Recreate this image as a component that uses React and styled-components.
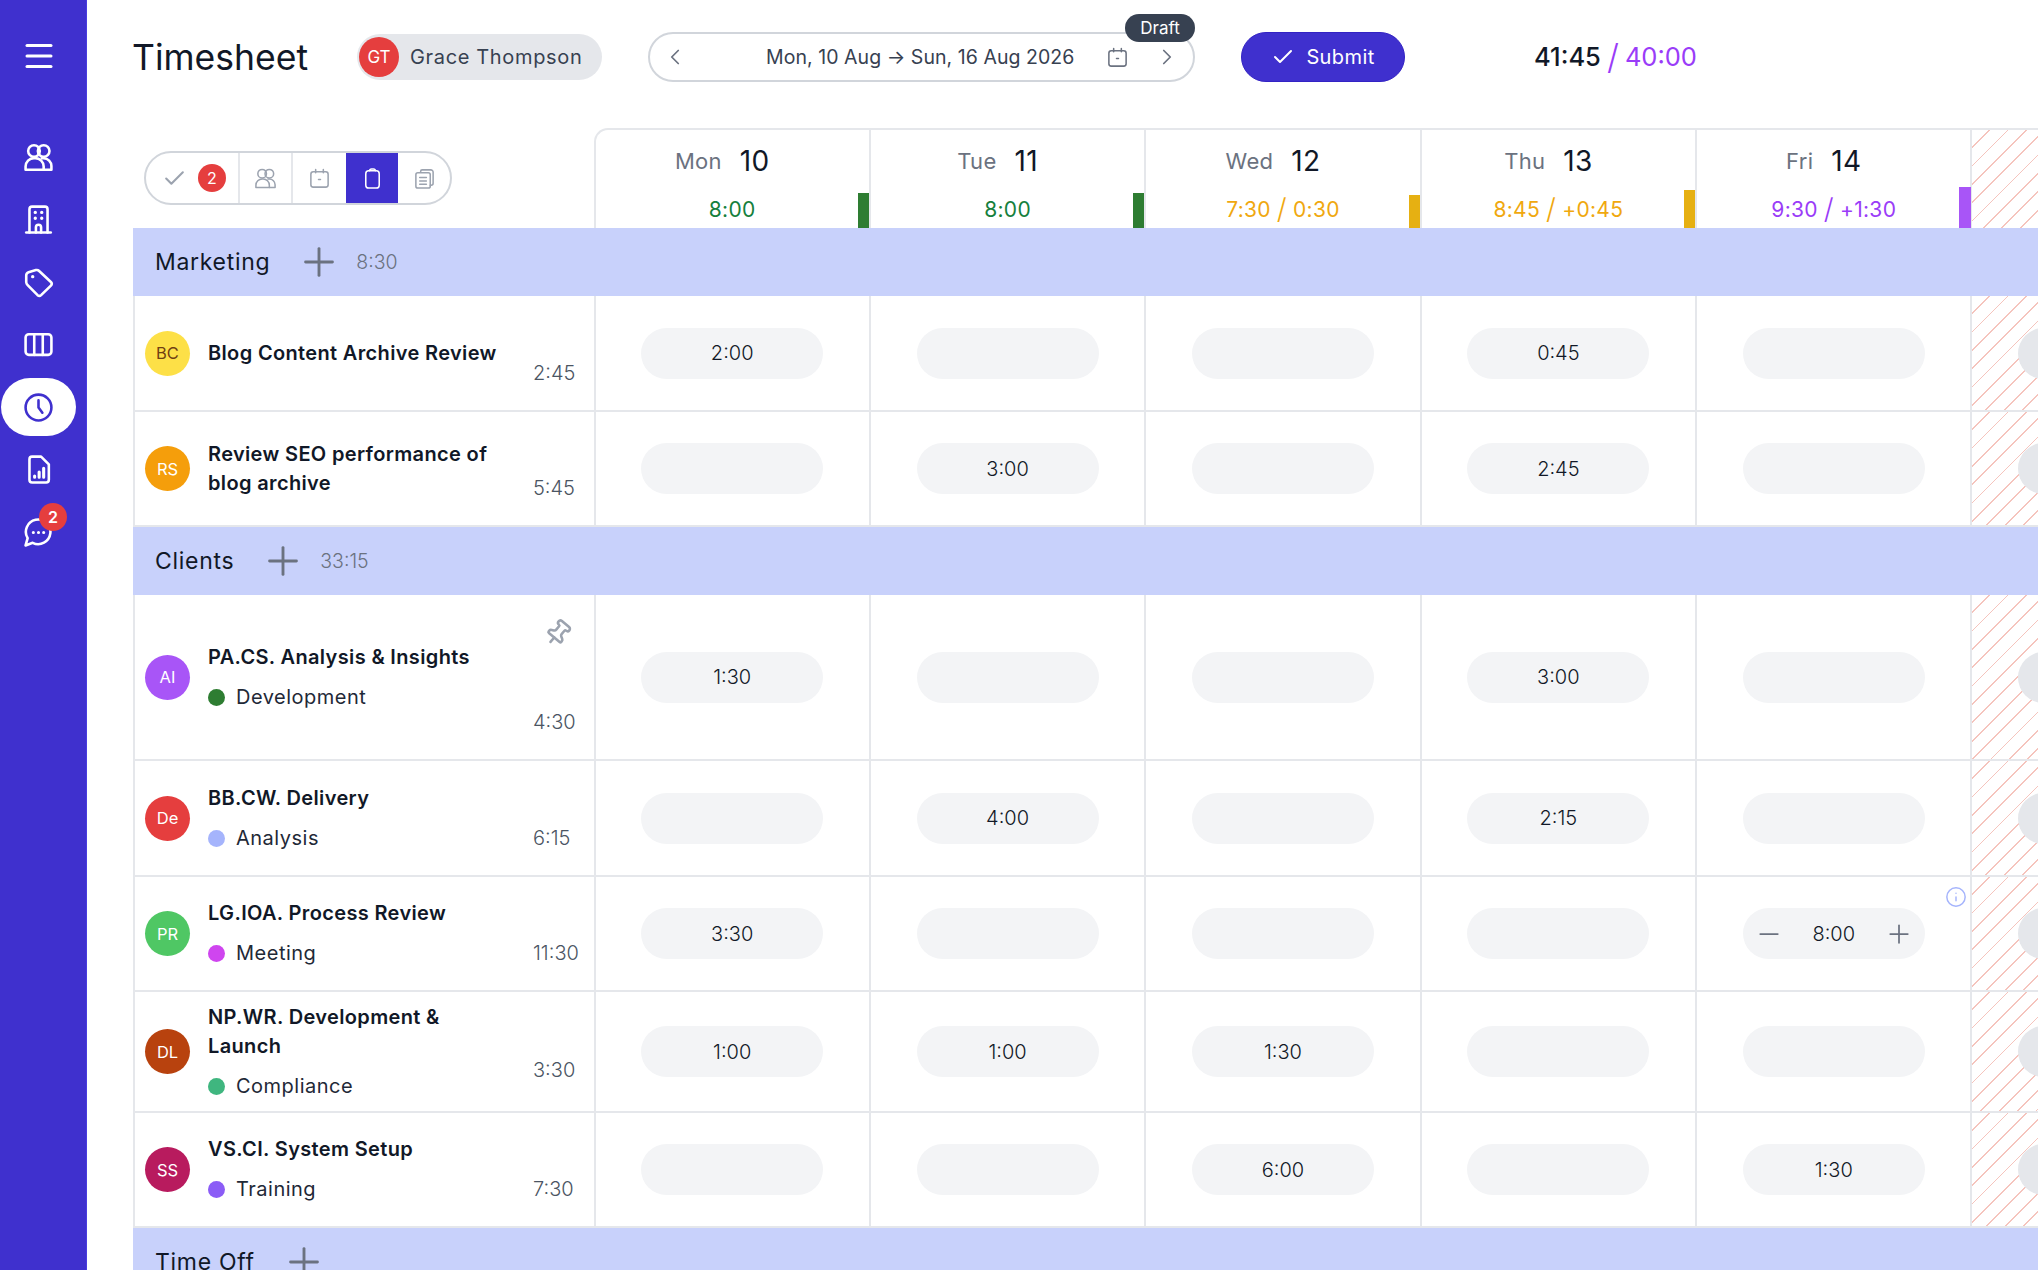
import React from 'react';
import styled, { createGlobalStyle, css } from 'styled-components';
import { Check, ChevronLeft, ChevronRight, Info, Menu, Minus, Pin, Plus } from 'lucide-react';

const GlobalStyle = createGlobalStyle`
  html, body {
    margin: 0;
    height: 100%;
    overflow: hidden;
    background: #fff;
    font-family: Inter, "Liberation Sans", sans-serif;
    color: #111827;
  }
  * { box-sizing: border-box; }
`;

const hatched = css`
  background: repeating-linear-gradient(135deg, #fff 0, #fff 11.8px, #f5c4bd 11.8px, #f5c4bd 13px);
`;

const Page = styled.div`
  display: flex;
  width: 100vw;
  height: 100vh;
  overflow: hidden;
`;

const Sidebar = styled.nav`
  flex: 0 0 87px;
  background: #3f30ce;
  border-right: 1px solid #4a3ce0;
  display: flex;
  flex-direction: column;
  align-items: flex-start;
  padding: 40px 0 0 1px;
  color: #fff;
`;

const SideMenu = styled.div`
  width: 75px;
  height: 32px;
  margin-bottom: 56px;
  display: flex;
  align-items: center;
  justify-content: center;
`;

const SideItem = styled.div`
  position: relative;
  width: 75px;
  height: 58px;
  margin-bottom: 4.5px;
  border-radius: 29px;
  display: flex;
  align-items: center;
  justify-content: center;
  background: ${p => (p.$active ? '#fff' : 'transparent')};
  color: ${p => (p.$active ? '#3f30ce' : '#fff')};
`;

const SideBadge = styled.span`
  position: absolute;
  top: 0;
  left: 38px;
  width: 28px;
  height: 28px;
  border-radius: 50%;
  background: #e53e3e;
  color: #fff;
  font-size: 16px;
  font-weight: 600;
  display: flex;
  align-items: center;
  justify-content: center;
`;

const Main = styled.main`
  flex: 1;
  min-width: 0;
  padding: 32px 0 0 46px;
  overflow: hidden;
`;

const TopBar = styled.header`
  display: flex;
  align-items: center;
  height: 50px;
  margin-bottom: 46px;
`;

const Title = styled.h1`
  margin: 0 47px 0 -1px;
  width: 178px;
  font-size: 35.500px;
  font-weight: 400;
  color: #111827;
  white-space: nowrap;
`;

const UserChip = styled.div`
  width: 245px;
  height: 46px;
  margin-right: 46px;
  padding-left: 2px;
  border-radius: 23px;
  background: #e5e7eb;
  display: flex;
  align-items: center;
  gap: 11px;
  font-size: 20px;
  letter-spacing: 0.65px;
  color: #374151;
`;

const ChipAvatar = styled.span`
  width: 40px;
  height: 40px;
  border-radius: 50%;
  background: #e53e3e;
  color: #fff;
  font-size: 17px;
  letter-spacing: 0;
  display: flex;
  align-items: center;
  justify-content: center;
`;

const DateRange = styled.div`
  position: relative;
  width: 547px;
  height: 50px;
  margin-right: 46px;
  padding: 0 0 0 12px;
  border: 2px solid #d1d5db;
  border-radius: 25px;
  display: flex;
  align-items: center;
  color: #6b7280;
`;

const DateText = styled.span`
  margin-left: 78px;
  width: 340px;
  font-size: 19.500px;
  letter-spacing: 0.05px;
  color: #374151;
  white-space: nowrap;
`;

const DateNext = styled.span`
  margin-left: 25px;
  display: flex;
`;

const DraftBadge = styled.span`
  position: absolute;
  top: -20px;
  right: -2px;
  width: 70px;
  height: 28px;
  border-radius: 14px;
  background: #374151;
  color: #fff;
  font-size: 17px;
  display: flex;
  align-items: center;
  justify-content: center;
`;

const SubmitButton = styled.button`
  width: 164px;
  height: 50px;
  margin-right: 129px;
  border: 1px solid #3323c4;
  border-radius: 25px;
  background: #3f30ce;
  color: #fff;
  font-family: inherit;
  font-size: 20px;
  letter-spacing: 0.4px;
  display: flex;
  align-items: center;
  justify-content: center;
  gap: 11px;
`;

const Totals = styled.div`
  font-size: 25.500px;
  font-weight: 500;
  color: #111827;
  white-space: nowrap;
  display: flex;
  align-items: center;
  gap: 6px;
`;

const TotalsTarget = styled.span`
  color: #9a3cf8;
  font-weight: 400;
`;

const Slash = styled.span`
  font-size: 1.35em;
  font-weight: 300;
  line-height: 1;
  color: ${p => p.$color || 'inherit'};
`;

const Grid = styled.div`
  display: grid;
  grid-template-columns: 460.500px repeat(7, 275.400px);
  width: max-content;
`;

const ToolCell = styled.div`
  height: 100px;
  padding-left: 11px;
  display: flex;
  align-items: center;
`;

const Toolbar = styled.div`
  width: 308px;
  height: 54px;
  border: 2px solid #d1d5db;
  border-radius: 27px;
  display: flex;
  overflow: hidden;
  color: #9ca3af;
`;

const ToolButton = styled.div`
  flex: 0 0 ${p => p.$w || 53}px;
  height: 100%;
  padding-left: ${p => p.$pad || 0}px;
  display: flex;
  align-items: center;
  justify-content: center;
  gap: 11px;
  border-right: ${p => (p.$divider ? '2px solid #e5e7eb' : 'none')};
  background: ${p => (p.$active ? '#3f30ce' : 'transparent')};
  color: ${p => (p.$active ? '#fff' : '#9ca3af')};
`;

const ToolBadge = styled.span`
  width: 28px;
  height: 28px;
  border-radius: 50%;
  background: #e53e3e;
  color: #fff;
  font-size: 16px;
  display: flex;
  align-items: center;
  justify-content: center;
`;

const DayHead = styled.div`
  position: relative;
  height: 100px;
  border-top: 2px solid #e5e7eb;
  border-left: 2px solid #e5e7eb;
  border-top-left-radius: ${p => (p.$first ? '14px' : '0')};
  text-align: center;
`;

const DayTitle = styled.div`
  height: 62px;
  padding-right: 20px;
  display: flex;
  align-items: center;
  justify-content: center;
  gap: 18px;
  font-size: 22px;
  letter-spacing: 0.3px;
  color: #6b7280;
`;

const DayNum = styled.span`
  font-size: 28px;
  color: #111827;
`;

const DayHours = styled.div`
  height: 32px;
  margin-top: 1px;
  font-size: 21px;
  letter-spacing: 0.3px;
  display: flex;
  align-items: center;
  justify-content: center;
  gap: 6px;
  color: ${p => p.$color};
`;

const DayBar = styled.span`
  position: absolute;
  right: -1px;
  bottom: 0;
  width: 12px;
  background: ${p => p.$color};
`;

const HatchHead = styled.div`
  ${hatched}
  height: 100px;
  border-top: 2px solid #e5e7eb;
  border-left: 2px solid #e5e7eb;
`;

const GroupRow = styled.div`
  grid-column: 1 / -1;
  height: 68px;
  padding-left: 22px;
  background: #c8d1fb;
  display: flex;
  align-items: center;
  color: #6b7280;
`;

const GroupName = styled.span`
  margin-right: 26px;
  font-size: 23px;
  letter-spacing: 0.7px;
  color: #111827;
`;

const GroupTime = styled.span`
  margin-left: 14px;
  font-size: 19.500px;
  font-weight: 300;
`;

const TaskCell = styled.div`
  position: relative;
  height: ${p => p.$h}px;
  padding-left: 10px;
  border-left: 2px solid #e5e7eb;
  border-bottom: 2px solid #e5e7eb;
  display: flex;
  align-items: center;
`;

const Avatar = styled.span`
  flex: 0 0 45px;
  height: 45px;
  margin-right: 18px;
  border-radius: 50%;
  background: ${p => p.$bg};
  color: ${p => p.$fg || '#fff'};
  font-size: 16.500px;
  display: flex;
  align-items: center;
  justify-content: center;
`;

const TaskInfo = styled.div`
  width: 300px;
`;

const TaskName = styled.div`
  font-size: 20px;
  font-weight: 600;
  letter-spacing: 0.35px;
  line-height: 29px;
  color: #111827;
`;

const TaskType = styled.div`
  margin-top: 11px;
  display: flex;
  align-items: center;
  gap: 11px;
  font-size: 20px;
  letter-spacing: 0.5px;
  line-height: 29px;
  color: #1f2937;
`;

const Dot = styled.i`
  width: 17px;
  height: 17px;
  border-radius: 50%;
  background: ${p => p.$color};
`;

const TaskTotal = styled.span`
  position: absolute;
  left: 398px;
  bottom: ${p => p.$bottom || 24}px;
  font-size: 20px;
  font-weight: 300;
  line-height: 26px;
  color: #4b5563;
`;

const PinMark = styled.span`
  position: absolute;
  top: 24px;
  right: 22px;
  display: flex;
  color: #9ca3af;
  transform: rotate(40deg);
`;

const HourCell = styled.div`
  position: relative;
  height: ${p => p.$h}px;
  border-left: 2px solid #e5e7eb;
  border-bottom: 2px solid #e5e7eb;
  display: flex;
  align-items: center;
  justify-content: center;
  ${p => p.$weekend && hatched}
`;

const HourPill = styled.div`
  width: 182px;
  height: 51px;
  padding: 0 11px;
  border-radius: 26px;
  background: ${p => (p.$weekend ? '#e5e7eb' : '#f3f4f6')};
  display: flex;
  align-items: center;
  justify-content: ${p => (p.$edit ? 'space-between' : 'center')};
  font-size: 20px;
  font-weight: 300;
  color: #111827;
  svg { color: #6b7280; }
`;

const InfoMark = styled.span`
  position: absolute;
  top: 9px;
  right: 3px;
  display: flex;
  color: #a5b4fc;
`;

const Ico = ({ size = 31, sw = 2, children }) => (
  <svg width={size} height={size} viewBox="0 0 24 24" fill="none" stroke="currentColor" strokeWidth={sw} strokeLinecap="round" strokeLinejoin="round">
    {children}
  </svg>
);

const UsersIcon = props => (
  <Ico {...props}>
    <circle cx="8.500" cy="7" r="4.500" />
    <circle cx="16" cy="7" r="4.500" />
    <path d="M2 21.500V19a6.500 6.500 0 0 1 6.500-6.500h1A6.500 6.500 0 0 1 16 19v2.500z" />
    <path d="M14.500 12.600h1.500a6 6 0 0 1 6 6v2.900h-6" />
  </Ico>
);

const BuildingIcon = props => (
  <Ico {...props}>
    <path d="M5 22V4a2 2 0 0 1 2-2h10a2 2 0 0 1 2 2v18" />
    <path d="M2.500 22h19" />
    <path d="M10 22v-4a2 2 0 0 1 4 0v4" />
    <path d="M9.500 6.500h.01M14.500 6.500h.01M9.500 11h.01M14.500 11h.01" strokeWidth="2.600" />
  </Ico>
);

const TagIcon = props => (
  <Ico {...props}>
    <path d="M2.500 6.500Q2.500 4.600 4.300 4L10 2.400Q11.400 2 12.500 3.100L21.600 11.600Q23 13 21.600 14.400L14 21.800Q12.700 23 11.300 21.800L3.600 14Q2.600 13 2.500 11.800z" />
    <path d="M7.500 7.500h.01" strokeWidth="2.600" />
  </Ico>
);

const ColumnsIcon = props => (
  <Ico {...props}>
    <rect x="2" y="4" width="20" height="16" rx="2.500" />
    <path d="M8.700 4v16M15.300 4v16" />
  </Ico>
);

const ClockIcon = props => (
  <Ico {...props}>
    <circle cx="12" cy="12" r="10" />
    <path d="M12 6.500V12l3 4" />
  </Ico>
);

const ReportIcon = props => (
  <Ico {...props}>
    <path d="M7 2h7l6 6v12a2 2 0 0 1-2 2H7a2 2 0 0 1-2-2V4a2 2 0 0 1 2-2z" />
    <path d="M9 18v-1M12.500 18v-4M16 18v-7" strokeWidth="2.400" />
  </Ico>
);

const ChatIcon = props => (
  <Ico {...props}>
    <path d="M7.500 20A9.500 9.500 0 1 0 3.600 16.400L2 22z" />
    <path d="M8 12h.01M12 12h.01M16 12h.01" strokeWidth="2.400" />
  </Ico>
);

const CalendarIcon = props => (
  <Ico {...props}>
    <rect x="3" y="5" width="18" height="16" rx="2.500" />
    <path d="M8 2.500V6M16 2.500V6" />
    <path d="M11 13h2" />
  </Ico>
);

const ClipboardIcon = props => (
  <Ico {...props}>
    <rect x="5" y="4" width="14" height="18" rx="3" />
    <path d="M9 4a2 2 0 0 1 2-2h2a2 2 0 0 1 2 2" />
  </Ico>
);

const ClipboardsIcon = props => (
  <Ico {...props}>
    <path d="M8 5V4.500A1.500 1.500 0 0 1 9.500 3h9A2.500 2.500 0 0 1 21 5.500V17a2 2 0 0 1-2 2h-1" />
    <rect x="3" y="6" width="15" height="16" rx="2" />
    <path d="M7 11h7M7 14.500h7M7 18h7" />
  </Ico>
);

const days = [
  { day: 'Mon', num: 10, worked: '8:00', color: '#15803d', bar: '#2e7d32', barH: 35 },
  { day: 'Tue', num: 11, worked: '8:00', color: '#15803d', bar: '#2e7d32', barH: 35 },
  { day: 'Wed', num: 12, worked: '7:30', diff: '0:30', color: '#f0a80f', bar: '#e6b012', barH: 33 },
  { day: 'Thu', num: 13, worked: '8:45', diff: '+0:45', color: '#f0a80f', bar: '#e6b012', barH: 38 },
  { day: 'Fri', num: 14, worked: '9:30', diff: '+1:30', color: '#9a3cf8', bar: '#a855f7', barH: 41 },
];

const groups = [
  {
    name: 'Marketing',
    time: '8:30',
    rows: [
      { initials: 'BC', bg: '#fde047', fg: '#713f12', name: 'Blog Content Archive Review', total: '2:45', h: 116, hours: ['2:00', '', '', '0:45', ''] },
      { initials: 'RS', bg: '#f59e0b', name: 'Review SEO performance of blog archive', total: '5:45', h: 115, hours: ['', '3:00', '', '2:45', ''] },
    ],
  },
  {
    name: 'Clients',
    time: '33:15',
    rows: [
      { initials: 'AI', bg: '#a855f7', name: 'PA.CS. Analysis & Insights', type: 'Development', dot: '#2e7d32', total: '4:30', h: 166, pinned: true, hours: ['1:30', '', '', '3:00', ''] },
      { initials: 'De', bg: '#e53e3e', name: 'BB.CW. Delivery', type: 'Analysis', dot: '#a5b4fc', total: '6:15', h: 116, hours: ['', '4:00', '', '2:15', ''] },
      { initials: 'PR', bg: '#4fc764', name: 'LG.IOA. Process Review', type: 'Meeting', dot: '#cf45ef', total: '11:30', h: 115, hours: ['3:30', '', '', '', 'edit'] },
      { initials: 'DL', bg: '#b8420e', name: 'NP.WR. Development & Launch', type: 'Compliance', dot: '#3fb67f', total: '3:30', h: 121, lift: 28, hours: ['1:00', '1:00', '1:30', '', ''] },
      { initials: 'SS', bg: '#b81b5e', name: 'VS.CI. System Setup', type: 'Training', dot: '#8b5cf6', total: '7:30', h: 115, hours: ['', '', '6:00', '', '1:30'] },
    ],
  },
  { name: 'Time Off', rows: [] },
];

const navItems = [
  { Icon: UsersIcon },
  { Icon: BuildingIcon },
  { Icon: TagIcon },
  { Icon: ColumnsIcon },
  { Icon: ClockIcon, active: true },
  { Icon: ReportIcon },
  { Icon: ChatIcon, badge: 2 },
];

const HourValue = ({ value }) => {
  if (value === 'edit') {
    return (
      <HourPill $edit>
        <Minus size={30} strokeWidth={1.4} />
        {'8:00'}
        <Plus size={30} strokeWidth={1.4} />
      </HourPill>
    );
  }
  return <HourPill>{value}</HourPill>;
};

const TaskRow = ({ row }) => (
  <>
    <TaskCell $h={row.h}>
      <Avatar $bg={row.bg} $fg={row.fg}>{row.initials}</Avatar>
      <TaskInfo>
        <TaskName>{row.name}</TaskName>
        {row.type && (
          <TaskType>
            <Dot $color={row.dot} />
            {row.type}
          </TaskType>
        )}
      </TaskInfo>
      <TaskTotal $bottom={row.lift}>{row.total}</TaskTotal>
      {row.pinned && (
        <PinMark>
          <Pin size={28} strokeWidth={2.2} />
        </PinMark>
      )}
    </TaskCell>
    {row.hours.map((value, i) => (
      <HourCell key={i} $h={row.h}>
        <HourValue value={value} />
        {value === 'edit' && (
          <InfoMark>
            <Info size={22} strokeWidth={1.6} />
          </InfoMark>
        )}
      </HourCell>
    ))}
    <HourCell $h={row.h} $weekend>
      <HourPill $weekend />
    </HourCell>
    <HourCell $h={row.h} $weekend>
      <HourPill $weekend />
    </HourCell>
  </>
);

export default function App() {
  return (
    <Page>
      <GlobalStyle />
      <Sidebar>
        <SideMenu>
          <Menu size={36} strokeWidth={2} />
        </SideMenu>
        {navItems.map(({ Icon, active, badge }, i) => (
          <SideItem key={i} $active={active}>
            <Icon />
            {badge && <SideBadge>{badge}</SideBadge>}
          </SideItem>
        ))}
      </Sidebar>
      <Main>
        <TopBar>
          <Title>Timesheet</Title>
          <UserChip>
            <ChipAvatar>GT</ChipAvatar>
            Grace Thompson
          </UserChip>
          <DateRange>
            <ChevronLeft size={26} strokeWidth={1.6} />
            <DateText>Mon, 10 Aug → Sun, 16 Aug 2026</DateText>
            <CalendarIcon size={23} sw={1.6} />
            <DateNext><ChevronRight size={26} strokeWidth={1.6} /></DateNext>
            <DraftBadge>Draft</DraftBadge>
          </DateRange>
          <SubmitButton>
            <Check size={24} strokeWidth={2} />
            Submit
          </SubmitButton>
          <Totals>
            41:45
            <Slash $color="#9a3cf8">/</Slash>
            <TotalsTarget>40:00</TotalsTarget>
          </Totals>
        </TopBar>
        <Grid>
          <ToolCell>
            <Toolbar>
              <ToolButton $w={94} $pad={4} $divider>
                <Check size={25} strokeWidth={2} />
                <ToolBadge>2</ToolBadge>
              </ToolButton>
              <ToolButton $w={53} $divider><UsersIcon size={23} sw={1.6} /></ToolButton>
              <ToolButton $w={53}><CalendarIcon size={23} sw={1.6} /></ToolButton>
              <ToolButton $w={52} $active><ClipboardIcon size={23} sw={1.6} /></ToolButton>
              <ToolButton $w={52}><ClipboardsIcon size={23} sw={1.6} /></ToolButton>
            </Toolbar>
          </ToolCell>
          {days.map((d, i) => (
            <DayHead key={d.day} $first={i === 0}>
              <DayTitle>{d.day}<DayNum>{d.num}</DayNum></DayTitle>
              <DayHours $color={d.color}>
                {d.worked}
                {d.diff && <Slash>/</Slash>}
                {d.diff}
              </DayHours>
              <DayBar $color={d.bar} style={{ height: d.barH }} />
            </DayHead>
          ))}
          <HatchHead />
          <HatchHead />
          {groups.map(group => (
            <React.Fragment key={group.name}>
              <GroupRow>
                <GroupName>{group.name}</GroupName>
                <Plus size={46} strokeWidth={1.5} />
                {group.time && <GroupTime>{group.time}</GroupTime>}
              </GroupRow>
              {group.rows.map(row => <TaskRow key={row.initials} row={row} />)}
            </React.Fragment>
          ))}
        </Grid>
      </Main>
    </Page>
  );
}
